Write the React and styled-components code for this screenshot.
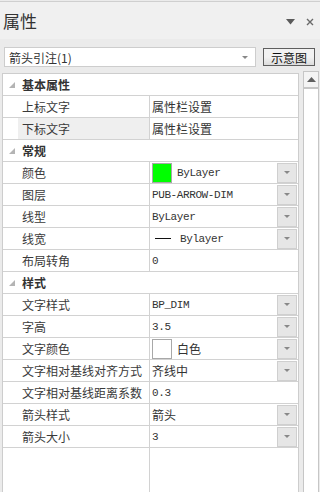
import React from "react";
import styled, { createGlobalStyle } from "styled-components";

const GlobalStyle = createGlobalStyle`
  html, body {
    margin: 0;
    padding: 0;
    background: #ebebeb;
  }
  * {
    box-sizing: border-box;
  }
`;

const sections = [
  {
    title: "基本属性",
    rows: [
      { name: "上标文字", value: "属性栏设置" },
      { name: "下标文字", value: "属性栏设置", selected: true },
    ],
  },
  {
    title: "常规",
    rows: [
      { name: "颜色", value: "ByLayer", swatch: "#00ff00", drop: true },
      { name: "图层", value: "PUB-ARROW-DIM", drop: true },
      { name: "线型", value: "ByLayer", drop: true },
      { name: "线宽", value: "Bylayer", line: true, drop: true },
      { name: "布局转角", value: "0" },
    ],
  },
  {
    title: "样式",
    rows: [
      { name: "文字样式", value: "BP_DIM", drop: true },
      { name: "字高", value: "3.5", drop: true },
      { name: "文字颜色", value: "白色", swatch: "#ffffff", drop: true },
      { name: "文字相对基线对齐方式", value: "齐线中", drop: true },
      { name: "文字相对基线距离系数", value: "0.3" },
      { name: "箭头样式", value: "箭头", drop: true },
      { name: "箭头大小", value: "3", drop: true },
    ],
  },
];

const isLatin = (s) => /^[\x00-\x7f]+$/.test(s);

const App = () => {
  return (
    <>
      <GlobalStyle />
      <Panel>
        <TitleBar>
          <Titulo>属性</Titulo>
          <TitleIcons>
            <svg width="9" height="6" viewBox="0 0 9 6">
              <path d="M0 0 H9 L4.5 5.5 Z" fill="#5a5a5a" />
            </svg>
            <svg width="8" height="8" viewBox="0 0 8 8">
              <path d="M1 1 L7 7 M7 1 L1 7" stroke="#6a6a6a" strokeWidth="1.4" />
            </svg>
          </TitleIcons>
        </TitleBar>

        <Toolbar>
          <Combo>
            <span>箭头引注(1)</span>
            <SmallArrow />
          </Combo>
          <SchemeButton>示意图</SchemeButton>
        </Toolbar>

        <Body>
          <Grid>
            {sections.map((sec) => (
              <React.Fragment key={sec.title}>
                <HeaderRow>
                  <Gutter>
                    <svg width="6" height="6" viewBox="0 0 6 6">
                      <path d="M6 0 V6 H0 Z" fill="#b4b4b4" />
                    </svg>
                  </Gutter>
                  <HeaderTitle>{sec.title}</HeaderTitle>
                </HeaderRow>
                {sec.rows.map((row) => (
                  <PropRow key={row.name}>
                    <Gutter />
                    <NameCell selected={row.selected}>{row.name}</NameCell>
                    <ValueCell>
                      {row.swatch && <Swatch color={row.swatch} />}
                      {row.line && <LineSample />}
                      <ValueText mono={isLatin(row.value)} indent={row.line}>
                        {row.value}
                      </ValueText>
                      {row.drop && (
                        <DropButton>
                          <SmallArrow />
                        </DropButton>
                      )}
                    </ValueCell>
                  </PropRow>
                ))}
              </React.Fragment>
            ))}
            <Filler>
              <div />
              <FillerName />
              <div />
            </Filler>
          </Grid>
          <Scrollbar>
            <ScrollUp>
              <svg width="9" height="5" viewBox="0 0 9 5">
                <path d="M0 5 H9 L4.5 0 Z" fill="#606060" />
              </svg>
            </ScrollUp>
          </Scrollbar>
        </Body>
      </Panel>
    </>
  );
};

const Panel = styled.div`
  width: 320px;
  height: 492px;
  display: flex;
  flex-direction: column;
  background: #ebebeb;
  font-family: "Noto Sans CJK SC", "Liberation Sans", sans-serif;
`;

const TitleBar = styled.div`
  height: 38px;
  margin-top: 1px;
  border-top: 1px solid #cfcfcf;
  background: #f0f0f0;
  display: flex;
  align-items: center;
  justify-content: space-between;
  padding: 0 6px 0 3px;
`;

const Titulo = styled.div`
  font-size: 17px;
  color: #333;
  line-height: 1;
  margin-top: -1px;
`;

const TitleIcons = styled.div`
  display: flex;
  align-items: center;
  gap: 11px;
  margin-top: 2px;
`;

const Toolbar = styled.div`
  display: flex;
  align-items: center;
  padding: 4px 4px 0 4px;
  height: 32px;
  gap: 7px;
`;

const Combo = styled.div`
  width: 252px;
  height: 20px;
  background: #fff;
  border: 1px solid #cdcdcd;
  display: flex;
  align-items: center;
  justify-content: space-between;
  padding: 0 7px 0 4px;
  font-size: 12px;
  color: #333;
`;

const SmallArrow = styled.span`
  width: 0;
  height: 0;
  border-left: 3px solid transparent;
  border-right: 3px solid transparent;
  border-top: 3px solid #888;
`;

const SchemeButton = styled.div`
  width: 52px;
  height: 18px;
  border: 1px solid #5e5e5e;
  background: linear-gradient(#f2f2f2 0%, #f2f2f2 50%, #dcdcdc 100%);
  font-size: 12px;
  color: #111;
  display: flex;
  align-items: center;
  justify-content: center;
`;

const Body = styled.div`
  flex: 1;
  display: flex;
  gap: 4px;
  padding: 0 1px 0 2px;
  min-height: 0;
`;

const Grid = styled.div`
  flex: 1;
  margin-top: 2px;
  background: #fff;
  border: 1px solid #cdcdcd;
  border-bottom: none;
  display: flex;
  flex-direction: column;
`;

const rowBase = `
  display: grid;
  grid-template-columns: 15px 132px 1fr;
  height: 22px;
  border-bottom: 1px solid #d2d2d2;
`;

const HeaderRow = styled.div`
  ${rowBase}
`;

const PropRow = styled.div`
  ${rowBase}
`;

const Gutter = styled.div`
  display: flex;
  align-items: center;
  justify-content: center;
  padding-left: 2px;
`;

const HeaderTitle = styled.div`
  grid-column: 2 / 4;
  display: flex;
  align-items: center;
  padding-left: 4px;
  font-size: 12px;
  font-weight: 700;
  color: #333;
`;

const NameCell = styled.div`
  display: flex;
  align-items: center;
  padding-left: 4px;
  font-size: 12px;
  color: #3a3a3a;
  white-space: nowrap;
  background: ${(props) => (props.selected ? "#efefef" : "#fff")};
  border-right: 1px solid #d2d2d2;
`;

const ValueCell = styled.div`
  display: flex;
  align-items: center;
  padding-left: 2px;
  min-width: 0;
`;

const ValueText = styled.span`
  font-family: ${(props) =>
    props.mono
      ? '"Liberation Mono", "DejaVu Sans Mono", monospace'
      : '"Noto Sans CJK SC", sans-serif'};
  font-size: ${(props) => (props.mono ? "11px" : "12px")};
  letter-spacing: ${(props) => (props.mono ? "-0.4px" : "0")};
  color: #333;
  margin-left: ${(props) => (props.indent ? "9px" : "0")};
  white-space: nowrap;
`;

const Swatch = styled.span`
  width: 20px;
  height: 20px;
  background: ${(props) => props.color};
  border: 1px solid #a8a8a8;
  margin-right: 5px;
  flex-shrink: 0;
`;

const LineSample = styled.span`
  width: 16px;
  height: 0;
  border-top: 1px solid #111;
  margin-left: 3px;
`;

const DropButton = styled.div`
  margin-left: auto;
  margin-right: 1px;
  width: 20px;
  height: 20px;
  background: #e6e6e6;
  border: 1px solid #cfcfcf;
  display: flex;
  align-items: center;
  justify-content: center;
  flex-shrink: 0;
`;

const Filler = styled.div`
  flex: 1;
  display: grid;
  grid-template-columns: 15px 132px 1fr;
`;

const FillerName = styled.div`
  border-right: 1px solid #d2d2d2;
`;

const Scrollbar = styled.div`
  width: 16px;
  background: #fff;
  border: 1px solid #c6c6c6;
  border-bottom: none;
  display: flex;
  flex-direction: column;
`;

const ScrollUp = styled.div`
  height: 17px;
  border-bottom: 2px solid #c6c6c6;
  background: #f4f4f4;
  display: flex;
  align-items: center;
  justify-content: center;
`;

export default App;
